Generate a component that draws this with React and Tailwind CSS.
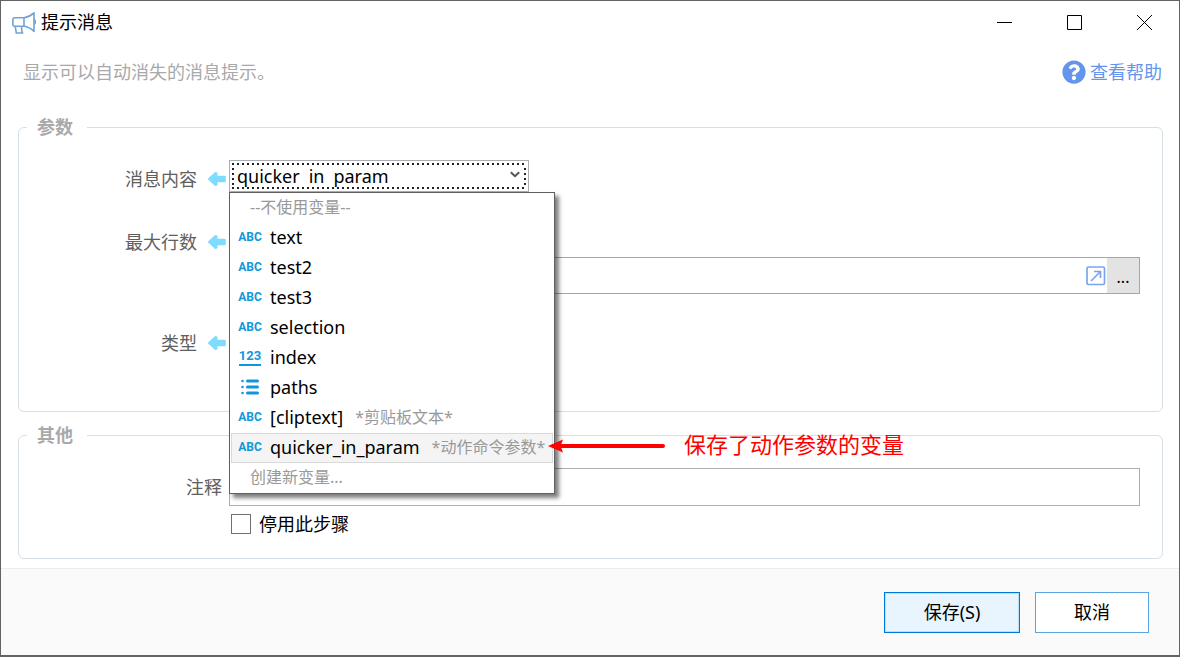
import { FaQuestionCircle } from "react-icons/fa";

const variables = [
  { name: "text", kind: "text" },
  { name: "test2", kind: "text" },
  { name: "test3", kind: "text" },
  { name: "selection", kind: "text" },
  { name: "index", kind: "number" },
  { name: "paths", kind: "list" },
  { name: "[cliptext]", kind: "text", note: "*剪贴板文本*" },
  { name: "quicker_in_param", kind: "text", note: "*动作命令参数*", selected: true },
];

function MegaphoneIcon() {
  return (
    <svg width="24" height="22" viewBox="0 0 24 22" fill="none" stroke="#6fa3d4" strokeWidth="1.6" strokeLinejoin="round" aria-hidden="true">
      <path d="M12 5.7H2.6Q.9 5.7 .9 7.4V12.6Q.9 14.3 2.6 14.3H12V5.7" />
      <path d="M12 5.7Q17.500 5 22 .9V19.400Q17.500 15 12 14.300" />
      <path d="M22 7.800Q23.400 8.200 23.400 10Q23.400 11.800 22 12.200" />
      <path d="M3.200 14.300L4.300 21H10.600L9.600 18V14.300" />
    </svg>
  );
}

function LeftArrow() {
  return (
    <svg className="shrink-0" width="20" height="16" viewBox="0 0 20 16" fill="#80dcff" stroke="#80dcff" strokeWidth="2" strokeLinejoin="round" aria-hidden="true">
      <path d="M2 8L8.500 2L9.500 2.500V5.700H17.800V10.300H9.500V13.500L8.500 14Z" />
    </svg>
  );
}

function KindIcon({ kind }) {
  if (kind === "list") {
    return (
      <svg width="18" height="16" viewBox="0 0 18 16" stroke="#1296db" strokeWidth="3" strokeLinecap="round" aria-hidden="true">
        <path d="M6.500 2H16.500M6.500 8H16.500M6.500 14H16.500" />
        <path d="M1.500 2H1.510M1.500 8H1.510M1.500 14H1.510" strokeWidth="2.600" />
      </svg>
    );
  }
  if (kind === "number") {
    return (
      <span className="border-b-2 border-[#1296db] font-[Roboto,sans-serif] text-[13px] font-bold leading-4 text-[#1296db]">
        123
      </span>
    );
  }
  return (
    <span className="font-[Roboto,sans-serif] text-[12px] font-bold leading-4 text-[#1296db]">
      ABC
    </span>
  );
}

function Callout() {
  return (
    <div className="pointer-events-none absolute left-full top-0 flex h-6 w-max -translate-x-1 items-center gap-[18px]">
      <svg width="118" height="14" viewBox="0 0 118 14" aria-hidden="true">
        <path d="M12 7H115" stroke="#f00" strokeWidth="4" strokeLinecap="round" />
        <path d="M0 7L15 .5L12.500 7L15 13.500Z" fill="#f00" />
      </svg>
      <span className="pb-1 text-[22px] leading-6 text-[#ff0000]">保存了动作参数的变量</span>
    </div>
  );
}

function VariableMenu() {
  return (
    <ul role="listbox" aria-label="变量" className="absolute left-0 top-full z-10 w-[326px] border border-[#5f5f5f] bg-white shadow-[4px_4px_4px_rgba(0,0,0,0.5)]">
      <li role="option" aria-selected="false" className="flex h-[30px] items-center pb-0.5 pl-5 text-[16px] text-[#999]">
        --不使用变量--
      </li>
      {variables.map((v) => (
        <li
          key={v.name}
          role="option"
          aria-selected={v.selected ? "true" : "false"}
          className={
            v.selected
              ? "relative mx-px flex h-[30px] items-center border border-[#dadada] bg-[#f4f4f4] pb-0.5 pl-1.5 pr-1"
              : "flex h-[30px] items-center px-2 pb-0.5"
          }
        >
          <span className="flex w-6 shrink-0 justify-center">
            <KindIcon kind={v.kind} />
          </span>
          <span className="ml-2 whitespace-nowrap text-[18px] text-black">{v.name}</span>
          {v.note && <span className="ml-3 whitespace-nowrap text-[16px] text-[#999]">{v.note}</span>}
          {v.selected && <Callout />}
        </li>
      ))}
      <li role="option" aria-selected="false" className="flex h-[30px] items-center pb-0.5 pl-5 text-[16px] text-[#999]">
        创建新变量...
      </li>
    </ul>
  );
}

function Row({ id, label, children, className }) {
  return (
    <div className={"flex items-start " + (className || "")}>
      <div className="flex w-[188px] shrink-0 items-center justify-end gap-2.5 pr-0.5 pt-[7px]">
        <label htmlFor={id} className="leading-6 text-[#606060]">{label}</label>
        <LeftArrow />
      </div>
      <div className="min-w-0 flex-1">{children}</div>
    </div>
  );
}

function Section({ title, className, children }) {
  return (
    <fieldset className={"min-w-0 rounded-[6px] border border-[#d5dfe5] px-[22px] " + className}>
      <legend className="-ml-3.5 pl-[10px] pr-[14px] font-bold leading-6 text-[#a9a9a9]">{title}</legend>
      {children}
    </fieldset>
  );
}

export default function App() {
  return (
    <div className="flex min-h-screen flex-col border border-b-2 border-[#636363] bg-white font-['Noto_Sans','Noto_Sans_CJK_SC',sans-serif] text-[18px] text-black">
      <header className="flex h-[43px] items-center pl-[11px]">
        <MegaphoneIcon />
        <h1 className="ml-[5px] flex-1 pb-0.5 leading-6">提示消息</h1>
        <button type="button" aria-label="最小化" className="flex h-full w-[70px] items-center justify-center">
          <svg width="15" height="15" viewBox="0 0 15 15" stroke="#000" aria-hidden="true"><path d="M0 7.500H15" /></svg>
        </button>
        <button type="button" aria-label="最大化" className="flex h-full w-[70px] items-center justify-center">
          <svg width="15" height="15" viewBox="0 0 15 15" stroke="#000" fill="none" aria-hidden="true"><path d="M.5 .5H14.500V14.500H.5Z" /></svg>
        </button>
        <button type="button" aria-label="关闭" className="flex h-full w-[70px] items-center justify-center">
          <svg width="15" height="15" viewBox="0 0 15 15" stroke="#000" aria-hidden="true"><path d="M0 0L15 15M15 0L0 15" /></svg>
        </button>
      </header>

      <div className="flex items-center justify-between pb-[31px] pl-[22px] pr-[17px] pt-4">
        <p className="leading-6 text-[#a9a9a9]">显示可以自动消失的消息提示。</p>
        <a href="#help" className="flex items-center gap-1 leading-6 text-[#6495ed]">
          <FaQuestionCircle className="size-6" aria-hidden="true" />
          查看帮助
        </a>
      </div>

      <main className="flex flex-1 flex-col px-[17px] pb-[9px] pr-4">
        <Section title="参数" className="flex-1 pb-[50px]">
          <Row id="message" label="消息内容" className="mt-[21px]">
            <div className="relative w-[300px]">
              <div className="border border-[#abadb3] p-0.5">
                <div className="relative p-0.5 [background:repeating-linear-gradient(90deg,#222_0_2px,#fff_2px_5px)_top/100%_2px_no-repeat,repeating-linear-gradient(90deg,#222_0_2px,#fff_2px_5px)_bottom/100%_2px_no-repeat,repeating-linear-gradient(180deg,#222_0_2px,#fff_2px_5px)_left/2px_100%_no-repeat,repeating-linear-gradient(180deg,#222_0_2px,#fff_2px_5px)_right/2px_100%_no-repeat]">
                  <select id="message" defaultValue="quicker_in_param" className="block h-[22px] w-full appearance-none bg-white pl-[3px] leading-[22px] outline-none">
                    <option value="quicker_in_param">{"quicker\u2002in\u2002param"}</option>
                    <option value="text">text</option>
                  </select>
                  <svg className="pointer-events-none absolute right-1.5 top-2" width="10" height="8" viewBox="0 0 10 8" fill="none" stroke="#555" strokeWidth="2" aria-hidden="true">
                    <path d="M.8 1.200L5 5.200L9.200 1.200" />
                  </svg>
                </div>
              </div>
              <VariableMenu />
            </div>
          </Row>
          <Row id="max-lines" label="最大行数" className="mt-[31px]">
            <div className="mt-[34px] flex h-[37px] border border-[#a6a6a6]">
              <input id="max-lines" type="text" className="min-w-0 flex-1 px-2 outline-none" />
              <button type="button" aria-label="展开" className="flex w-[22px] items-center justify-center">
                <svg width="20" height="20" viewBox="0 0 20 20" fill="none" stroke="#7ba4ee" strokeWidth="1.700" aria-hidden="true">
                  <rect x="1" y="1" width="17.500" height="17.500" rx="1.500" />
                  <path d="M5 15L14 6M8 5.500H14.500V12" />
                </svg>
              </button>
              <button type="button" className="w-8 bg-[#e3e3e3] pt-0.5 text-[16px] leading-6">...</button>
            </div>
          </Row>
          <Row id="kind" label="类型" className="mt-[30px]">
            <input id="kind" type="text" className="h-8 w-[300px] outline-none" />
          </Row>
        </Section>

        <Section title="其他" className="mt-[11px] pb-[22px]">
          <div className="mt-[21px] flex items-center">
            <label htmlFor="comment" className="w-[188px] shrink-0 pr-[7px] text-right leading-6 text-[#606060]">注释</label>
            <input id="comment" type="text" className="h-[38px] min-w-0 flex-1 border border-[#abadb3] px-2 outline-none" />
          </div>
          <div className="ml-[190px] mt-[6px] flex items-center gap-2">
            <input id="disable" type="checkbox" className="size-5 appearance-none border border-[#707070] bg-white" />
            <label htmlFor="disable" className="leading-6">停用此步骤</label>
          </div>
        </Section>
      </main>

      <footer className="flex justify-end gap-[15px] border-t border-[#ececec] bg-[#fafafa] pb-[22px] pr-[30px] pt-[23px]">
        <button type="button" className="h-[41px] w-[136px] border border-[#0078d7] bg-[#e8f5ff] shadow-[inset_0_0_0_1px_#b9def7]">保存(S)</button>
        <button type="button" className="h-[41px] w-[114px] border border-[#5ba5e3] bg-white">取消</button>
      </footer>
    </div>
  );
}
